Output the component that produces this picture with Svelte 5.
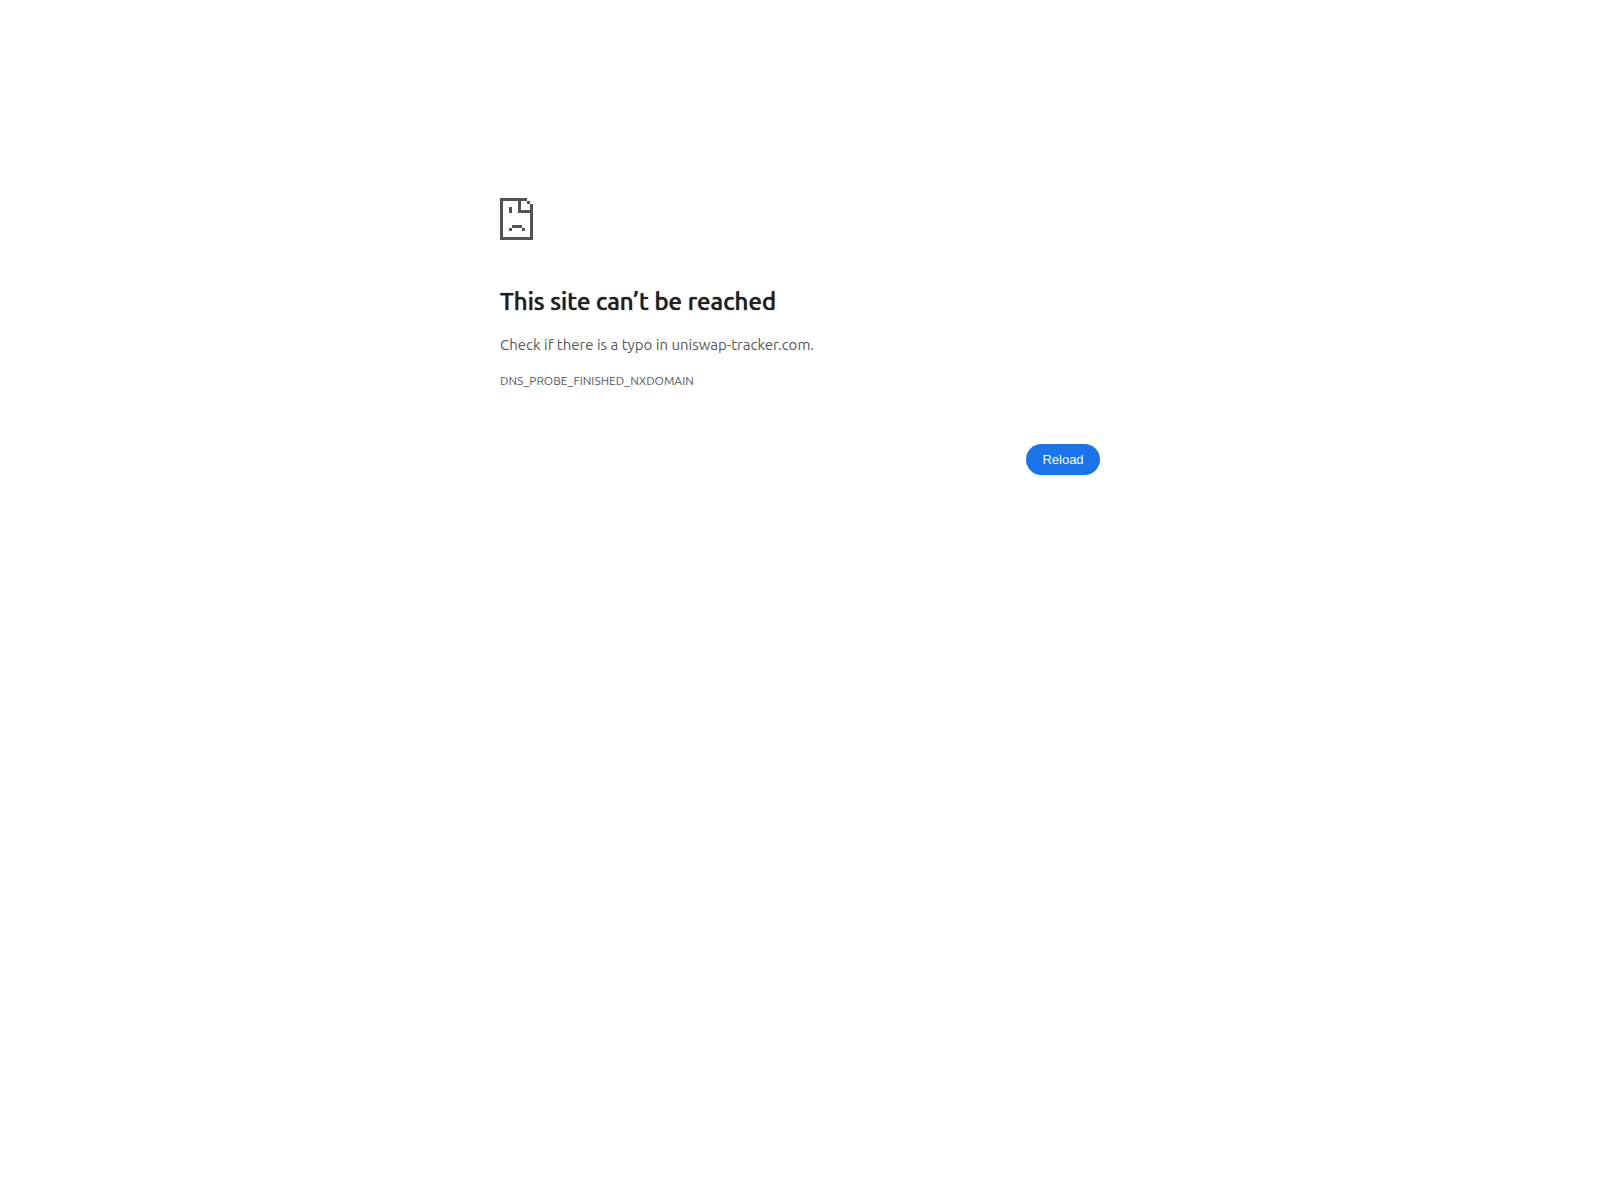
<script>
  const host = 'uniswap-tracker.com';
  const reload = () => location.reload();
</script>

<main>
  <svg class="icon" viewBox="0 0 36 42" shape-rendering="crispEdges" aria-hidden="true">
    <path fill="#535353" d="M0 0h27v3h3v3h3v36H0zM3 3v36h27V15H18V3zM21 3v9h9V6h-3V3zM9 9h3v6H9zM12 27h10v3H12zM9 30h3v3H9zM22 30h3v3h-3z" fill-rule="evenodd" />
  </svg>
  <h1>This site can’t be reached</h1>
  <p>Check if there is a typo in {host}.</p>
  <div class="code">DNS_PROBE_FINISHED_NXDOMAIN</div>
  <div class="actions">
    <button type="button" onclick={reload}>Reload</button>
  </div>
</main>

<style>
  :global(body) {
    background: #fff;
    color: #575757;
    font-family: Ubuntu, "Noto Sans", sans-serif;
    font-size: 15px;
  }
  main {
    box-sizing: border-box;
    max-width: 600px;
    margin: 0 auto;
    padding-top: 198px;
    line-height: 24px;
  }
  .icon {
    display: block;
    width: 36px;
    height: 42px;
  }
  h1 {
    margin: 47px 0 16px;
    color: #1f1f1f;
    font-size: 24px;
    font-weight: 500;
    line-height: 30px;
    text-shadow: 0 0 1px currentColor;
  }
  p {
    margin: 0;
  }
  .code {
    margin-top: 12px;
    font-size: 12px;
  }
  .actions {
    display: flex;
    justify-content: flex-end;
    margin-top: 51px;
  }
  button {
    min-width: 74px;
    padding: 8px 16px;
    border: 0;
    border-radius: 20px;
    background: #1a73e8;
    color: #fff;
    font: 13px/15px "Liberation Sans", Arial, sans-serif;
    cursor: pointer;
  }
</style>
